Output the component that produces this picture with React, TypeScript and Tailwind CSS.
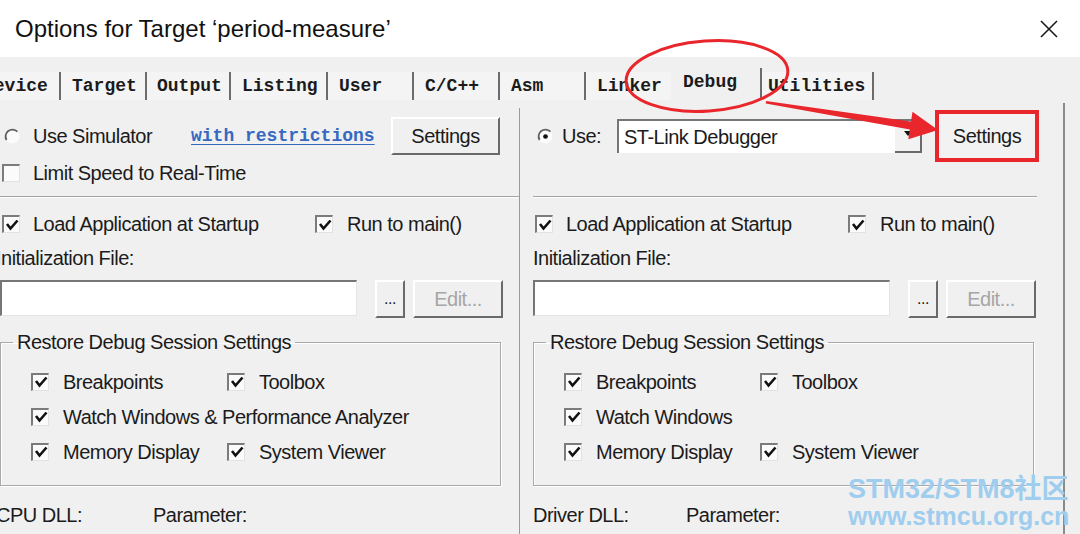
import React from 'react';

const sans = "font-['Liberation_Sans',Arial,sans-serif]";
const mono = "font-['Liberation_Mono','Courier_New',monospace]";

function Check({ on = true }: { on?: boolean }) {
  return (
    <span className="flex h-[18px] w-[18px] shrink-0 items-center justify-center border-l-2 border-t-2 border-r border-b border-l-[#7b7b7b] border-t-[#7b7b7b] border-r-[#e2e2e2] border-b-[#e2e2e2] bg-[#fbfbfb]">
      {on && (
        <svg width="14" height="14" viewBox="0 0 14 14">
          <path d="M2 6 L5.5 10.5 L12.5 2.5" fill="none" stroke="#111" strokeWidth="2.6" />
        </svg>
      )}
    </span>
  );
}

function Radio({ on = false }: { on?: boolean }) {
  return (
    <svg width="17" height="17" viewBox="0 0 16 16" className="shrink-0">
      <circle cx="8" cy="8" r="6.5" fill="#fbfbfb" />
      <path d="M12.6 3.4 A6.5 6.5 0 0 0 2.4 11.3" fill="none" stroke="#5f5f5f" strokeWidth="1.7" />
      {on && <circle cx="8" cy="8" r="2.2" fill="#111" />}
    </svg>
  );
}

function Btn({ children, w, dim = false }: { children: React.ReactNode; w: string; dim?: boolean }) {
  return (
    <div
      className={`${w} flex h-[38px] shrink-0 items-center justify-center border-2 border-t-white border-l-white border-r-[#6a6a6a] border-b-[#6a6a6a] bg-[#f0f0f0] text-[20px] tracking-[-0.5px] ${
        dim ? 'text-[#a6a6a6]' : 'text-[#1b1b1b]'
      }`}
    >
      {children}
    </div>
  );
}

function Sep({ w }: { w: string }) {
  return (
    <div className={`${w} mt-[5px] h-[2px] border-t border-t-[#a3a3a3] border-b border-b-white`} />
  );
}

function Restore({ watchLabel }: { watchLabel: string }) {
  return (
    <fieldset className="mt-[14px] w-[501px] border border-[#a9a9a9] pb-[16px] pt-[10px] shadow-[inset_1px_1px_0_#fff,1px_1px_0_#fff]">
      <legend className="ml-[12px] px-[4px] leading-[24px]">Restore Debug Session Settings</legend>
      <div className="flex h-[35px] items-center">
        <span className="ml-[30px]"><Check /></span>
        <span className="ml-[14px] w-[164px]">Breakpoints</span>
        <Check />
        <span className="ml-[14px]">Toolbox</span>
      </div>
      <div className="flex h-[35px] items-center">
        <span className="ml-[30px]"><Check /></span>
        <span className="ml-[14px]">{watchLabel}</span>
      </div>
      <div className="flex h-[35px] items-center">
        <span className="ml-[30px]"><Check /></span>
        <span className="ml-[14px] w-[164px]">Memory Display</span>
        <Check />
        <span className="ml-[14px]">System Viewer</span>
      </div>
    </fieldset>
  );
}

function InitBlock({ watchLabel, dll, cut }: { watchLabel: string; dll: string; cut: boolean }) {
  return (
    <>
      <div className="mt-[8px] flex h-[36px] items-center">
        <span className="ml-[2px]"><Check /></span>
        <span className="ml-[13px] w-[282px]">Load Application at Startup</span>
        <Check />
        <span className="ml-[14px]">Run to main()</span>
      </div>
      <div className={`${cut ? '-ml-[4px]' : ''} flex h-[32px] items-center`}>Initialization File:</div>
      <div className="mt-[6px] flex h-[36px] items-start">
        <div className="h-[36px] w-[357px] border-l-2 border-t-2 border-l-[#767676] border-t-[#767676] border-r border-b border-r-[#e4e4e4] border-b-[#e4e4e4] bg-white" />
        <div className="ml-[18px]">
          <Btn w="w-[30px]">
            <span className="text-[16px] leading-[16px]">...</span>
          </Btn>
        </div>
        <div className="ml-[8px]">
          <Btn w="w-[90px]" dim>
            Edit...
          </Btn>
        </div>
      </div>
      <Restore watchLabel={watchLabel} />
      <div className={`${cut ? '-ml-[4px]' : ''} mt-[14px] flex h-[30px] items-center`}>
        <span className={cut ? 'w-[157px]' : 'w-[153px]'}>{dll}</span>
        <span>Parameter:</span>
      </div>
    </>
  );
}

const tabs = [
  { label: 'Device', w: 'w-[86px]', pl: 'pl-[8px]' },
  { label: 'Target', w: 'w-[86px]', pl: 'pl-[11px]' },
  { label: 'Output', w: 'w-[84px]', pl: 'pl-[10px]' },
  { label: 'Listing', w: 'w-[97px]', pl: 'pl-[11px]' },
  { label: 'User', w: 'w-[86px]', pl: 'pl-[11px]' },
  { label: 'C/C++', w: 'w-[86px]', pl: 'pl-[11px]' },
  { label: 'Asm', w: 'w-[86px]', pl: 'pl-[11px]' },
];

export default function App() {
  return (
    <div className={`relative h-[534px] w-[1080px] overflow-hidden bg-[#f0f0f0] text-[#1b1b1b] ${sans}`}>
      {/* title bar */}
      <div className="flex h-[57px] items-center justify-between bg-white pl-[15px] pr-[22px]">
        <span className="text-[24px] text-[#111]">Options for Target ‘period-measure’</span>
        <svg width="18" height="18" viewBox="0 0 18 18">
          <path d="M1 1 L17 17 M17 1 L1 17" stroke="#1a1a1a" strokeWidth="1.6" />
        </svg>
      </div>

      {/* tabs */}
      <div className={`-ml-[25px] flex h-[46px] items-start pt-[15px] text-[18px] font-bold ${mono}`}>
        {tabs.map((t) => (
          <div
            key={t.label}
            className={`${t.w} ${t.pl} flex h-[28px] shrink-0 items-center border-r-2 border-r-[#6c6c6c] bg-[#f4f4f4] leading-[28px]`}
          >
            {t.label}
          </div>
        ))}
        <div className="flex h-[28px] w-[85px] shrink-0 items-center bg-[#f4f4f4] pl-[11px] leading-[28px]">Linker</div>
        <div className="-mt-[4px] flex h-[32px] w-[91px] shrink-0 items-center border-r-2 border-r-[#6c6c6c] pb-[4px] pl-[12px] leading-[28px]">
          Debug
        </div>
        <div className="flex h-[28px] w-[112px] shrink-0 items-center border-r-2 border-r-[#6c6c6c] bg-[#f4f4f4] pl-[6px] leading-[28px]">
          Utilities
        </div>
      </div>

      {/* panel */}
      <div className="flex h-[431px] text-[20px] tracking-[-0.5px]">
        {/* left column */}
        <div className="w-[519px] shrink-0">
          <div className="flex flex-col pt-[14px]">
            <div className="flex h-[38px] items-center">
              <span className="ml-[4px]"><Radio /></span>
              <span className="ml-[12px] w-[158px]">Use Simulator</span>
              <span className={`w-[200px] text-[18px] font-bold tracking-normal text-[#3569c0] underline underline-offset-[3px] ${mono}`}>
                with restrictions
              </span>
              <Btn w="w-[109px]">Settings</Btn>
            </div>
            <div className="flex h-[36px] items-center">
              <span className="ml-[2px]"><Check on={false} /></span>
              <span className="ml-[13px]">Limit Speed to Real-Time</span>
            </div>
            <Sep w="w-[519px]" />
            <InitBlock watchLabel="Watch Windows & Performance Analyzer" dll="CPU DLL:" cut />
          </div>
        </div>

        <div className="mt-[5px] w-[1px] shrink-0 bg-[#9a9a9a]" />

        {/* right column */}
        <div className="w-[543px] shrink-0 pl-[13px]">
          <div className="flex flex-col pt-[14px]">
            <div className="flex h-[38px] items-center">
              <span className="ml-[4px]"><Radio on /></span>
              <span className="ml-[8px] w-[55px]">Use:</span>
              <div className="flex h-[34px] w-[305px] items-stretch border-l-2 border-t-2 border-l-[#767676] border-t-[#767676] bg-white">
                <span className="flex flex-1 items-center pl-[5px]">ST-Link Debugger</span>
                <div className="flex w-[27px] items-start justify-center border-r-2 border-b-2 border-r-[#6a6a6a] border-b-[#6a6a6a] bg-[#f2f2f2] pt-[9px]">
                  <svg width="10" height="7" viewBox="0 0 10 7">
                    <path d="M1 1 L9 1 L5 6 Z" fill="#111" />
                  </svg>
                </div>
              </div>
              <div className="ml-[13px] flex h-[52px] w-[104px] items-center justify-center border-[4px] border-[#e8262c] bg-[#f2f2f2]">
                Settings
              </div>
            </div>
            <div className="h-[36px]" />
            <Sep w="w-[504px]" />
            <InitBlock watchLabel="Watch Windows" dll="Driver DLL:" cut={false} />
          </div>
        </div>

        <div className="w-[2px] shrink-0 bg-[#8a8a8a]" />
      </div>

      {/* annotations */}
      <svg className="pointer-events-none absolute left-0 top-0" width="1080" height="534" viewBox="0 0 1080 534">
        <ellipse cx="707" cy="76" rx="81" ry="35" fill="none" stroke="#e8262c" strokeWidth="3" transform="rotate(-4 707 76)" />
        <polygon points="766,101 912.6,121.7 911.4,129.7 765.8,103.5" fill="#e8262c" />
        <polygon points="938,130 912.5,111.7 908.3,139.3" fill="#e8262c" />
      </svg>

      <div className="pointer-events-none absolute left-[848px] top-[476px] font-bold leading-none text-[#9fcdee]">
        <div className="text-[27px] font-['Liberation_Sans','Noto_Sans_CJK_SC',sans-serif]">STM32/STM8社区</div>
        <div className="mt-[1px] text-[25px]">www.stmcu.org.cn</div>
      </div>
    </div>
  );
}
